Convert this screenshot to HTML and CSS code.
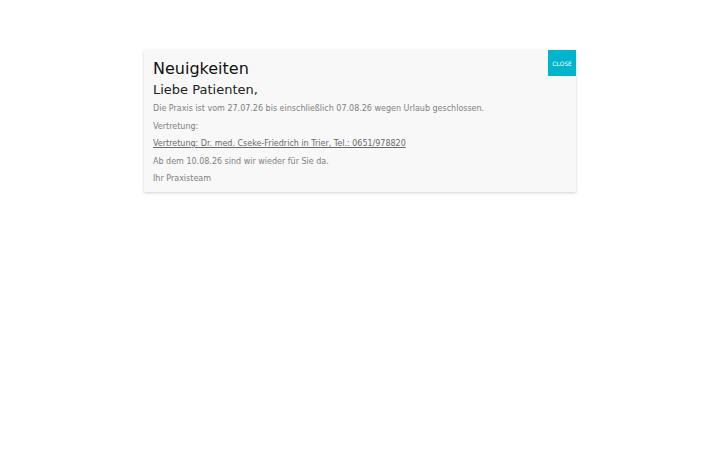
FILE: index.html
```html
<!DOCTYPE html>
<html lang="de">
<head>
<meta charset="utf-8">
<link rel="stylesheet" href="styles.css">
</head>
<body>
<div class="page">
  <div class="modal">
    <button class="close">CLOSE</button>
    <div class="content">
      <h1 class="title">Neuigkeiten</h1>
      <h2 class="subtitle">Liebe Patienten,</h2>
      <p class="text">Die Praxis ist vom 27.07.26 bis einschließlich 07.08.26 wegen Urlaub geschlossen.</p>
      <p class="text">Vertretung:</p>
      <p class="text"><a class="link" href="#">Vertretung: Dr. med. Cseke-Friedrich in Trier, Tel.: 0651/978820</a></p>
      <p class="text">Ab dem 10.08.26 sind wir wieder für Sie da.</p>
      <p class="text">Ihr Praxisteam</p>
    </div>
  </div>
</div>
</body>
</html>
```
FILE: styles.css
```css
html, body {
  margin: 0;
  padding: 0;
  background: #ffffff;
  font-family: "DejaVu Sans", sans-serif;
}
.page {
  width: 720px;
  height: 450px;
  padding-top: 50px;
  box-sizing: border-box;
  display: flex;
  justify-content: center;
  align-items: flex-start;
}
.modal {
  position: relative;
  width: 432px;
  background: #f8f8f8;
  box-shadow: 0 1px 3px rgba(0,0,0,0.18);
}
.content {
  padding: 9px 9px 1px 9px;
}
.title {
  margin: 0;
  font-size: 16px;
  font-weight: normal;
  color: #111;
  line-height: 20px;
}
.subtitle {
  margin: 1px 0 0 0;
  font-size: 13px;
  font-weight: normal;
  color: #222;
  line-height: 20px;
}
.text {
  margin: 0 0 5px 0;
  font-size: 8px;
  line-height: 12.5px;
  color: #808080;
}
.subtitle + .text {
  margin-top: 3px;
}
.link {
  color: #6a6a6a;
  text-decoration: underline;
}
.close {
  position: absolute;
  top: 0;
  right: 0;
  width: 28px;
  height: 26px;
  padding: 0;
  border: none;
  background: #00b4cc;
  color: #fff;
  font-family: "DejaVu Sans", sans-serif;
  font-size: 6px;
}
```
